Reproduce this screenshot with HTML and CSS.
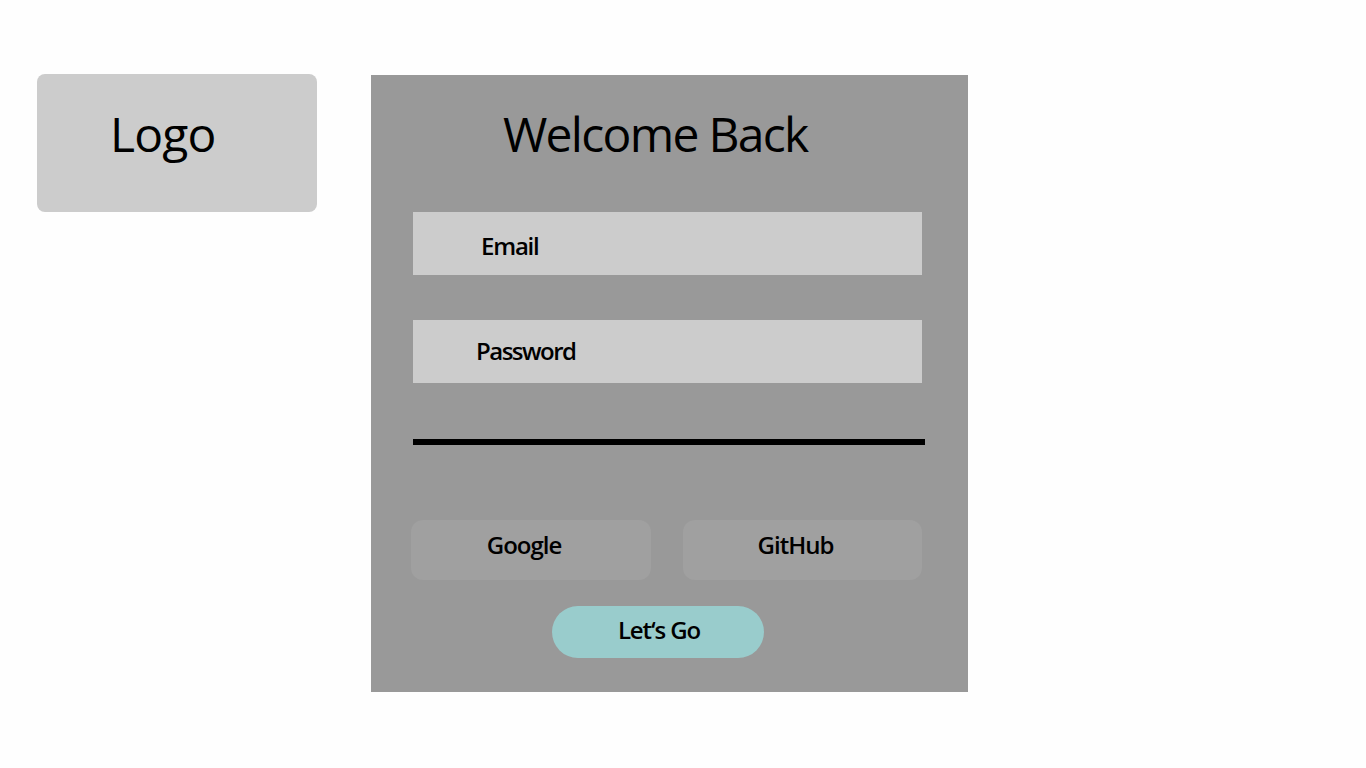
FILE: index.html
```html
<!DOCTYPE html>
<html lang="en">
<head>
<meta charset="utf-8">
<title>Welcome Back</title>
<link rel="stylesheet" href="styles.css">
</head>
<body>
<div class="page">
  <div class="logo"><span class="logo-text">Logo</span></div>
  <div class="card">
    <h1 class="title">Welcome Back</h1>
    <div class="field field-email">Email</div>
    <div class="field field-password">Password</div>
    <div class="divider"></div>
    <div class="socials">
      <div class="social">Google</div>
      <div class="social">GitHub</div>
    </div>
    <div class="go-row">
      <div class="go">Let‘s Go</div>
    </div>
  </div>
</div>
</body>
</html>
```
FILE: styles.css
```css
* { box-sizing: border-box; }
html, body { margin: 0; padding: 0; }
body {
  background: #fefefe;
  font-family: "Open Sans", "Liberation Sans", sans-serif;
  font-weight: 600;
  color: #000;
  width: 1366px;
  height: 768px;
  overflow: hidden;
}
.page {
  display: flex;
  align-items: flex-start;
  gap: 54px;
  padding: 74px 0 0 37px;
}
.logo {
  width: 280px;
  height: 138px;
  background: #cccccc;
  border-radius: 8px;
  padding: 36px 0 0 73px;
}
.logo-text {
  display: block;
  font-size: 48px;
  line-height: 48px;
  font-weight: 400;
  letter-spacing: -0.8px;
}
.card {
  width: 597px;
  height: 617px;
  margin-top: 1px;
  background: #999999;
  padding: 35px 0 0 42px;
}
.title {
  margin: 0 0 54px 90px;
  font-size: 48px;
  line-height: 48px;
  font-weight: 400;
  letter-spacing: -1.7px;
}
.field {
  width: 509px;
  height: 63px;
  background: #cccccc;
  font-size: 24px;
  line-height: 24px;
  letter-spacing: -1.2px;
}
.field-email { padding: 22px 0 0 68px; }
.field-password { margin-top: 45px; padding: 19px 0 0 63px; letter-spacing: -1.5px; }
.divider {
  margin-top: 56px;
  width: 512px;
  height: 6px;
  background: #000;
}
.socials {
  display: flex;
  gap: 32px;
  margin: 75px 0 0 -2px;
}
.social {
  width: 240px;
  height: 60px;
  background: #a0a0a0;
  border-radius: 12px;
  display: flex;
  align-items: center;
  justify-content: center;
  padding: 0 14px 10px 0;
  font-size: 24px;
  line-height: 24px;
  letter-spacing: -1px;
}
.social + .social { width: 239px; }
.go-row {
  display: flex;
  padding-left: 139px;
  margin-top: 26px;
}
.go {
  width: 212px;
  height: 52px;
  background: #99cccc;
  border-radius: 26px;
  display: flex;
  align-items: center;
  justify-content: center;
  padding: 0 0 4px 2px;
  font-size: 24px;
  line-height: 24px;
  letter-spacing: -1.1px;
}
```
